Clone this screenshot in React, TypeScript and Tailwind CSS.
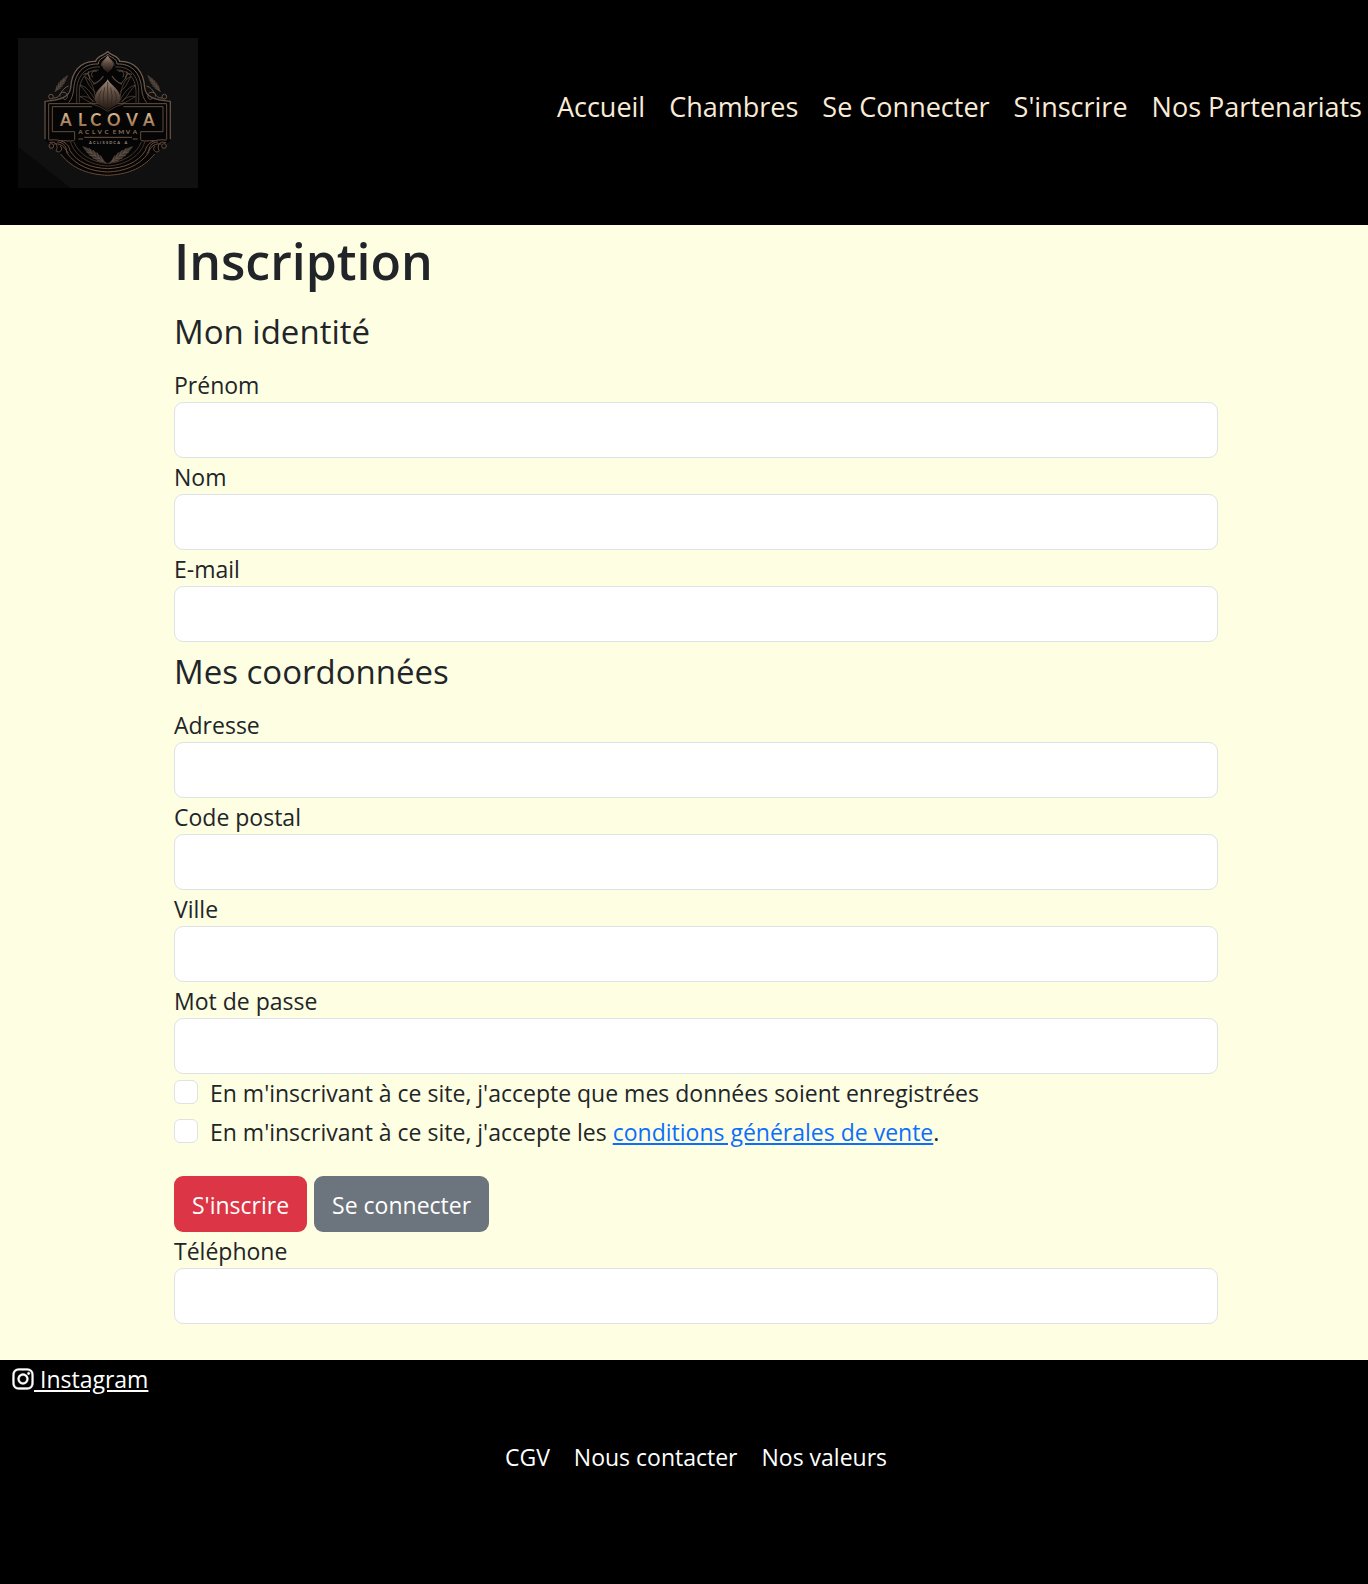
import React from "react";
import { FaInstagram } from "react-icons/fa";

const navLinks = ["Accueil", "Chambres", "Se Connecter", "S'inscrire", "Nos Partenariats"];
const footerLinks = ["CGV", "Nous contacter", "Nos valeurs"];

function Half() {
  return (
    <g fill="none" stroke="url(#bronze)">
      {/* frame */}
      <path strokeWidth="4" d="M323 94 C318 106 290 106 287 124 C240 122 214 158 212 204 C208 230 186 240 135 244 V358" />
      <path strokeWidth="3" d="M323 102 C316 114 296 112 295 132 C250 130 224 160 221 208 C219 224 216 236 206 248" />
      <path strokeWidth="2" d="M323 110 C314 120 304 122 304 138 M300 141 C258 138 232 166 230 210 V250" />
      <path strokeWidth="2" d="M296 150 C262 150 240 172 238 212 V248" />
      <path strokeWidth="3" d="M323 251 H146 V358" />
      <path strokeWidth="3" d="M276 260 H157 V335 H224 V358 C224 366 204 362 182 362" />
      <path strokeWidth="2" d="M276 252 Q300 258 323 274" />
      {/* lower arcs */}
      <path strokeWidth="3" d="M146 360 C186 356 206 370 210 392 C232 428 274 444 323 446" />
      <path strokeWidth="3" d="M172 366 C194 366 200 384 200 398 C230 440 276 454 323 456" />
      <path strokeWidth="3" d="M182 402 C220 450 272 464 323 466" />
      <path strokeWidth="2" d="M212 366 C224 410 274 436 323 438" />
      <path strokeWidth="2" d="M222 366 C236 404 280 428 323 430" />
      {/* scrolls */}
      <circle cx="153" cy="230" r="7" strokeWidth="3" />
      <path strokeWidth="3" d="M160 234 C184 236 180 206 206 198 M180 230 C176 214 200 212 202 226 C204 240 188 242 190 232" />
      <circle cx="154" cy="378" r="7" strokeWidth="3" />
      <path strokeWidth="3" d="M148 368 C170 360 176 382 168 392 C180 404 192 384 180 378 M162 372 C192 368 196 392 206 400" />
      {/* foliage */}
      <path strokeWidth="3" d="M286 232 C280 196 272 178 254 170 C262 184 266 200 286 216 M286 240 C270 214 258 198 240 196 C254 208 262 226 280 246 M284 246 C268 232 254 226 240 230 C256 238 266 248 280 250" opacity=".65" />
      <path strokeWidth="3" d="M266 154 C260 166 274 180 282 190 M290 154 C278 150 270 160 278 172 M250 164 C262 156 272 164 268 178" opacity=".8" />
      <path strokeWidth="4" d="M280 192 C292 188 304 178 310 168" opacity=".8" />
    </g>
  );
}

function Leaf({ transform }: { transform: string }) {
  return (
    <g transform={transform}>
      <path d="M0 0 C-10 -18 -9 -44 0 -66 C9 -44 10 -18 0 0Z" fill="#3a302a" />
      <path
        d="M0 0V-62M0 -8L-7 -20M0 -8L7 -20M0 -18L-8 -30M0 -18L8 -30M0 -28L-7 -40M0 -28L7 -40M0 -38L-5 -50M0 -38L5 -50"
        stroke="#65564b"
        strokeWidth="1.5"
        fill="none"
      />
    </g>
  );
}

function Logo() {
  return (
    <svg viewBox="54 54 540 450" className="block h-[150px] w-[180px]" role="img" aria-label="Alcova">
      <defs>
        <linearGradient id="bronze" gradientUnits="userSpaceOnUse" x1="130" y1="90" x2="230" y2="470">
          <stop offset="0" stopColor="#7c6a5d" />
          <stop offset=".5" stopColor="#5f4a3d" />
          <stop offset="1" stopColor="#6b4c39" />
        </linearGradient>
        <linearGradient id="gold" x1="0" y1="0" x2="0" y2="1">
          <stop offset="0" stopColor="#e6caa4" />
          <stop offset="1" stopColor="#8a5a38" />
        </linearGradient>
        <linearGradient id="bud" x1="0" y1="0" x2="0" y2="1">
          <stop offset="0" stopColor="#a08a7a" />
          <stop offset=".45" stopColor="#5d4a3f" />
          <stop offset="1" stopColor="#1e1510" />
        </linearGradient>
      </defs>
      <rect x="54" y="54" width="540" height="450" fill="#101010" />
      <path d="M54 380 L212 504 H54Z" fill="#090909" />
      <path
        d="M323 92 L290 122 C240 122 212 160 210 206 L186 240 H134 V360 L182 402 C220 450 272 468 323 468 C376 468 428 450 466 402 L512 360 V240 H460 L436 206 C434 160 406 122 356 122Z"
        fill="#050505"
      />
      <Half />
      <g transform="translate(646 0) scale(-1 1)">
        <Half />
      </g>
      <Leaf transform="translate(164 216) rotate(38)" />
      <Leaf transform="translate(482 216) rotate(-38)" />
      <Leaf transform="translate(318 430) rotate(-54) scale(1.35)" />
      <Leaf transform="translate(328 430) rotate(54) scale(1.35)" />
      <path d="M323 106 C316 120 305 124 306 136 C308 148 316 150 323 158 C330 150 338 148 340 136 C341 124 330 120 323 106Z" fill="url(#bud)" />
      <path d="M323 178 C314 196 285 208 284 236 C284 254 306 254 323 272 C340 254 362 254 362 236 C361 208 332 196 323 178Z" fill="url(#bud)" />
      <path
        d="M323 186V262M314 202Q306 228 312 254M332 202Q340 228 334 254M304 212Q292 232 300 248M342 212Q354 232 346 248"
        stroke="#2c211b"
        strokeWidth="2"
        fill="none"
      />
      <g textAnchor="middle" fontFamily="Lato, 'Liberation Sans', sans-serif">
        <text y="318" fontSize="50" fontWeight="700" fill="url(#gold)">
          <tspan x="197">A</tspan>
          <tspan x="247">L</tspan>
          <tspan x="287">C</tspan>
          <tspan x="341">O</tspan>
          <tspan x="396">V</tspan>
          <tspan x="446">A</tspan>
        </text>
        <text y="341" fontSize="19" fontWeight="700" fill="#8f7059">
          <tspan x="241">A</tspan>
          <tspan x="261">C</tspan>
          <tspan x="281">L</tspan>
          <tspan x="299">V</tspan>
          <tspan x="320">C</tspan>
          <tspan x="344">E</tspan>
          <tspan x="364">M</tspan>
          <tspan x="384">V</tspan>
          <tspan x="405">A</tspan>
        </text>
        <text y="371" fontSize="12" fontWeight="700" fill="#9a8a7d">
          <tspan x="271">A</tspan>
          <tspan x="283">C</tspan>
          <tspan x="294">L</tspan>
          <tspan x="302">I</tspan>
          <tspan x="311">S</tspan>
          <tspan x="321">S</tspan>
          <tspan x="332">D</tspan>
          <tspan x="344">C</tspan>
          <tspan x="356">A</tspan>
          <tspan x="378">A</tspan>
        </text>
      </g>
      <path d="M253 352H396M235 357H249M398 357H413" stroke="#6c5444" strokeWidth="3" />
    </svg>
  );
}

function Field({ id, label, type = "text" }: { id: string; label: string; type?: string }) {
  return (
    <div className="flex flex-col">
      <label htmlFor={id} className="pt-0.5 leading-[34px]">
        {label}
      </label>
      <input
        id={id}
        type={type}
        className="h-14 w-full rounded-[9px] border border-[#dee2e6] bg-white px-[18px] outline-none"
      />
    </div>
  );
}

function Check({ id, children }: { id: string; children: React.ReactNode }) {
  return (
    <div className="mb-[3px] flex min-h-9 items-start gap-3">
      <input
        id={id}
        type="checkbox"
        className="mt-[6px] size-6 shrink-0 appearance-none rounded-[6px] border border-[#dee2e6] bg-white checked:bg-[#0d6efd]"
      />
      <label htmlFor={id} className="pt-0.5 leading-[34px]">
        {children}
      </label>
    </div>
  );
}

export default function App() {
  return (
    <div className="flex min-h-screen flex-col bg-[#fefee2] font-['Open_Sans','Noto_Sans',sans-serif] text-[23px] leading-9 text-[#212529]">
      <header className="flex items-start justify-between bg-black pt-[38px] pr-[6px] pb-[37px] pl-[18px]">
        <a href="#accueil">
          <Logo />
        </a>
        <nav className="pt-12">
          <ul className="flex gap-6 text-[27px] leading-[42px] text-[#faebd7]">
            {navLinks.map((l) => (
              <li key={l}>
                <a href="#nav">{l}</a>
              </li>
            ))}
          </ul>
        </nav>
      </header>

      <main className="pb-9 pl-6">
        <form className="mx-auto w-full max-w-[1044px]" onSubmit={(e) => e.preventDefault()}>
          <h1 className="mb-2 pt-1 text-[50px] leading-[65px] font-semibold">Inscription</h1>
          <fieldset>
            <legend className="mb-2 pt-1 text-[33px] leading-[52px]">Mon identité</legend>
            <Field id="prenom" label="Prénom" />
            <Field id="nom" label="Nom" />
            <Field id="email" label="E-mail" type="email" />
          </fieldset>
          <fieldset>
            <legend className="mb-2 pt-1 text-[33px] leading-[52px]">Mes coordonnées</legend>
            <Field id="adresse" label="Adresse" />
            <Field id="cp" label="Code postal" />
            <Field id="ville" label="Ville" />
            <Field id="mdp" label="Mot de passe" type="password" />
          </fieldset>
          <Check id="rgpd">En m'inscrivant à ce site, j'accepte que mes données soient enregistrées</Check>
          <Check id="cgv">
            En m'inscrivant à ce site, j'accepte les{" "}
            <a href="#cgv" className="text-[#0d6efd] underline">
              conditions générales de vente
            </a>
            .
          </Check>
          <div className="flex gap-[7px] pt-6 text-white">
            <button type="submit" className="h-14 rounded-[9px] bg-[#dc3545] px-[18px] pt-0.5">
              S'inscrire
            </button>
            <button type="button" className="h-14 rounded-[9px] bg-[#6c757d] px-[18px] pt-0.5">
              Se connecter
            </button>
          </div>
          <Field id="tel" label="Téléphone" type="tel" />
        </form>
      </main>

      <footer className="flex-1 bg-black text-white">
        <div className="flex pl-[11px]">
          <a href="#instagram" className="flex items-center pt-0.5 leading-[34px]">
            <FaInstagram className="-mr-px size-6" strokeWidth="8" stroke="currentColor" aria-hidden="true" />
            <span className="whitespace-pre underline"> Instagram</span>
          </a>
        </div>
        <ul className="mt-[43px] mb-[107px] flex justify-center gap-6 pl-6">
          {footerLinks.map((l) => (
            <li key={l}>
              <a href="#footer">{l}</a>
            </li>
          ))}
        </ul>
      </footer>
    </div>
  );
}
